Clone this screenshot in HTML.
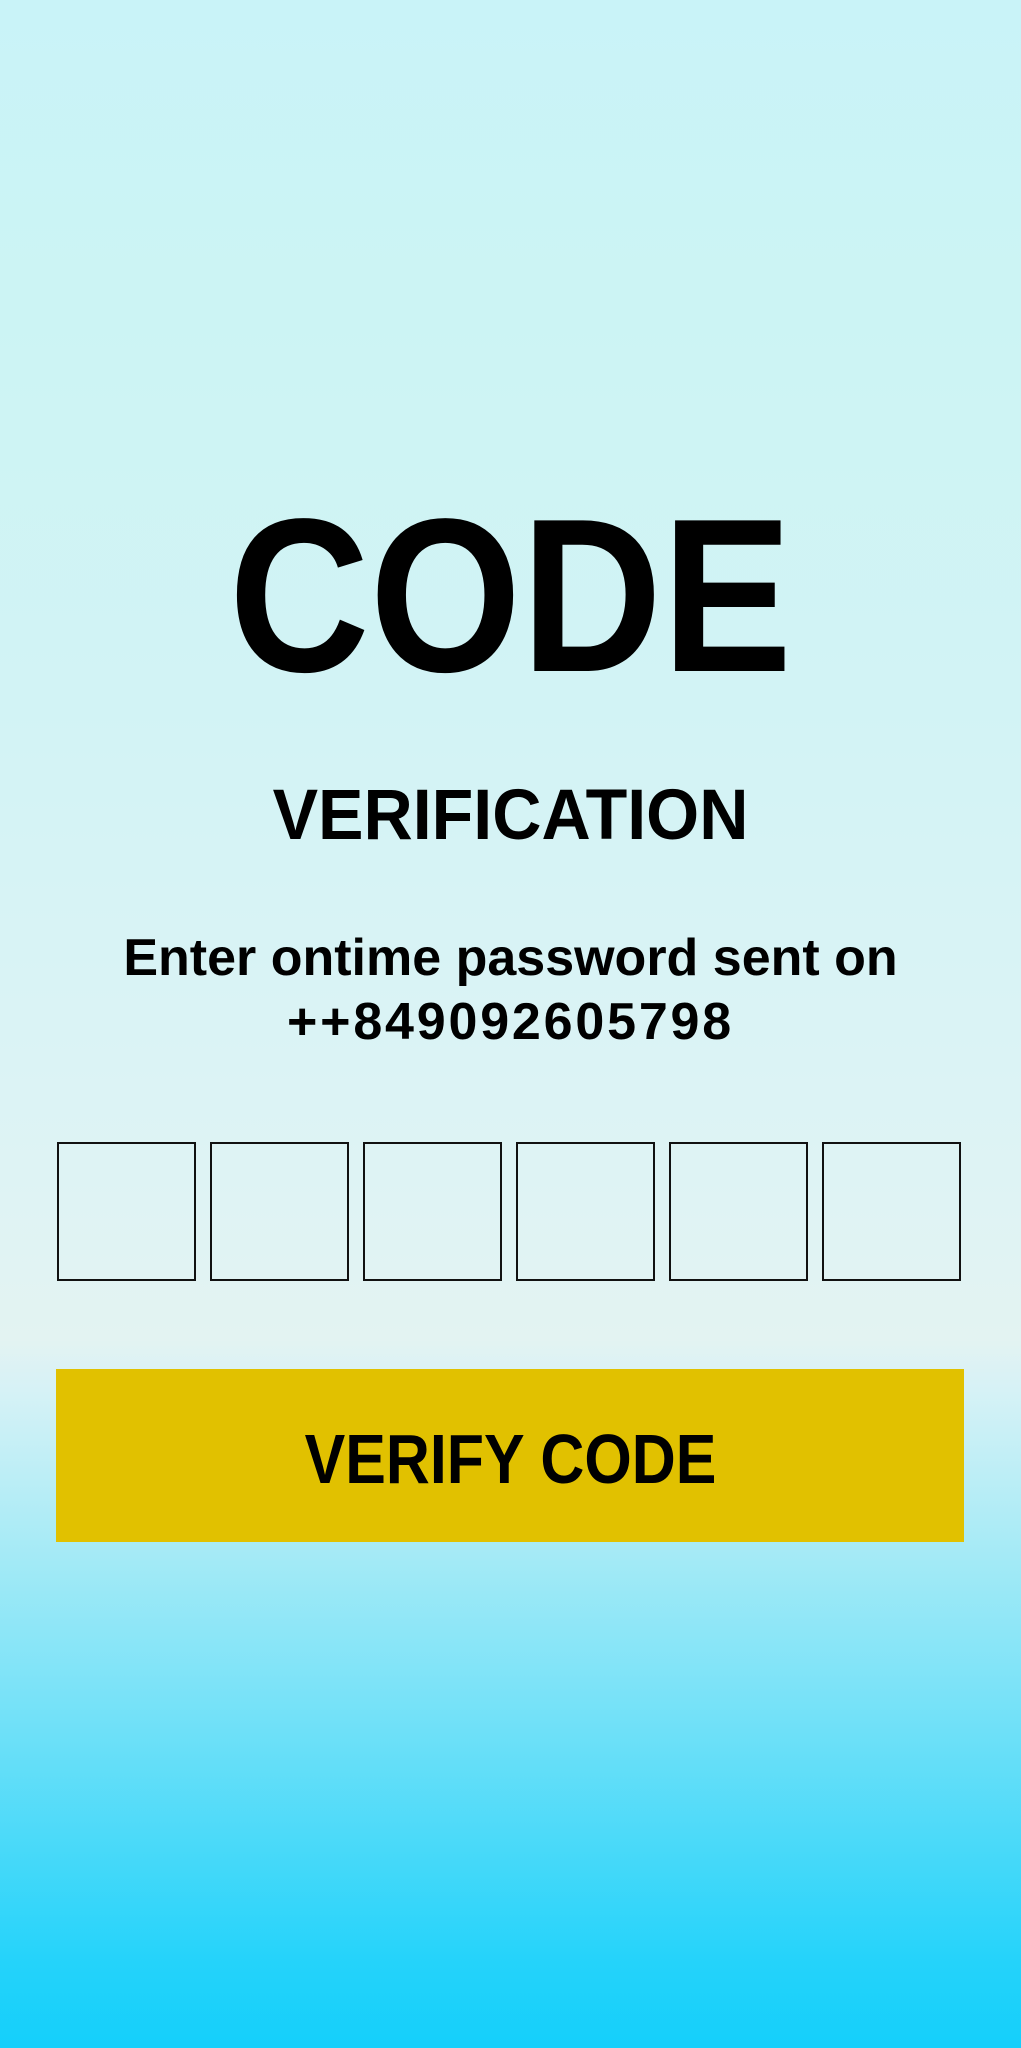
<!DOCTYPE html>
<html><head><meta charset="utf-8"><style>
html,body{margin:0;padding:0}
body{width:1021px;height:2048px;position:relative;overflow:hidden;font-family:"Liberation Sans",Arial,sans-serif;font-weight:bold;color:#000;
background:linear-gradient(to bottom,#c9f3f8 0px,#ccf4f4 300px,#d2f3f5 700px,#dcf3f5 1100px,#e3f3f2 1340px,#d6f2f6 1390px,#a3eaf6 1560px,#78e2f8 1700px,#48d9f9 1850px,#25d3fa 1960px,#14cffb 2048px);}
.t{position:absolute;left:0;width:1021px;text-align:center;line-height:1;white-space:nowrap}
.box{position:absolute;top:1142px;width:135px;height:135px;border:2.5px solid #111}
.btn{position:absolute;left:56px;top:1369px;width:908px;height:173px;background:#e1c100}
</style></head><body>
<div class="t" style="top:487px;font-size:219px;transform:scaleX(0.89)">CODE</div>
<div class="t" style="top:780px;font-size:71px;transform:scaleX(0.96)">VERIFICATION</div>
<div class="t" style="top:932px;font-size:52px">Enter ontime password sent on</div>
<div class="t" style="top:996px;font-size:52px;letter-spacing:2.8px">++849092605798</div>
<div class="box" style="left:57px"></div>
<div class="box" style="left:210px"></div>
<div class="box" style="left:363px"></div>
<div class="box" style="left:516px"></div>
<div class="box" style="left:669px"></div>
<div class="box" style="left:822px"></div>
<div class="btn"></div>
<div class="t" style="top:1424px;font-size:70px;transform:scaleX(0.87)">VERIFY CODE</div>
</body></html>
